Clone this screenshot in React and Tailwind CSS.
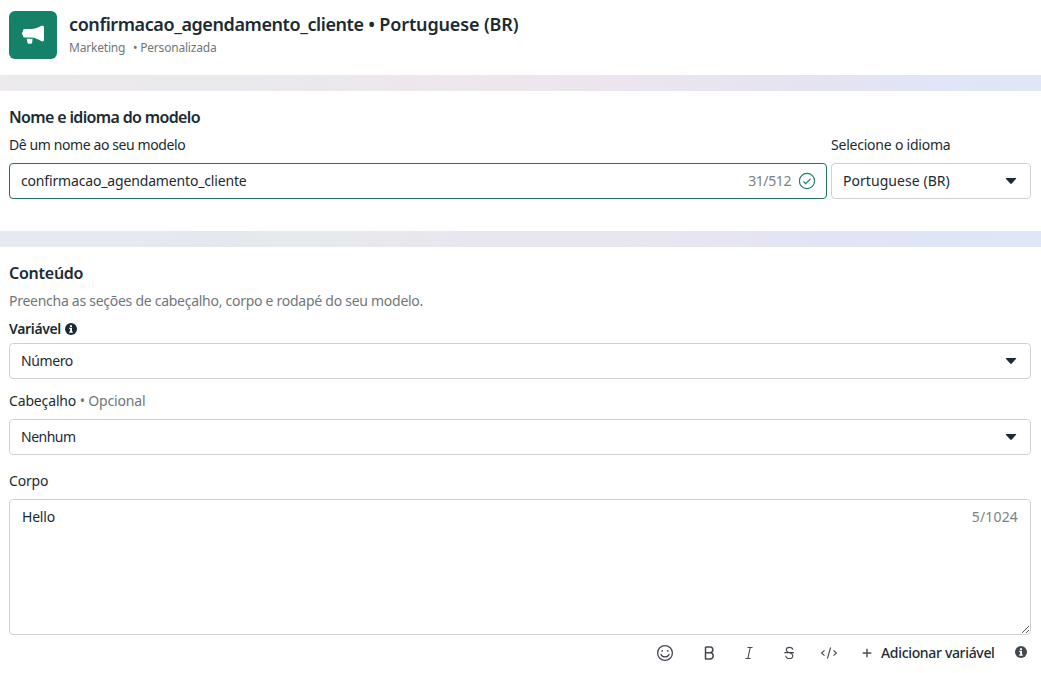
import React from "react";

function InfoIcon({ className }) {
  return (
    <svg className={className} width="12" height="12" viewBox="0 0 12 12">
      <circle cx="6" cy="6" r="6" fill="currentColor" />
      <path d="M5 2.200h2v1.700H5zM4.200 4.800H7v3.600h.8v1.300H4.200V8.400h.9V6.100h-.9z" fill="#fff" />
    </svg>
  );
}

function Caret() {
  return (
    <svg className="shrink-0" width="12" height="8" viewBox="0 0 12 8">
      <path d="M1.3 1h9.4q.9 0 .4.8L6.8 6.6q-.8.7-1.6 0L.9 1.8Q.4 1 1.3 1z" fill="#1c2b33" />
    </svg>
  );
}

function Select({ value, className }) {
  return (
    <div className={`flex h-9 items-center justify-between rounded border border-[#ccd3d7] bg-white pl-[11px] pr-[13px] ${className}`}>
      <span>{value}</span>
      <Caret />
    </div>
  );
}

function Toolbar() {
  return (
    <div className="flex h-9 items-center text-[#444950]">
      <svg className="ml-[647px]" width="18" height="18" viewBox="0 0 18 18" fill="none" stroke="currentColor" strokeWidth="1.3">
        <circle cx="9" cy="9" r="7.400" />
        <circle cx="6.200" cy="6.800" r=".9" fill="currentColor" stroke="none" />
        <circle cx="11.800" cy="6.800" r=".9" fill="currentColor" stroke="none" />
        <path d="M5 10.400q1.100 2.500 4 2.500t4-2.500" strokeLinecap="round" />
      </svg>
      <svg className="ml-[29px]" width="12" height="16" viewBox="0 0 12 16" fill="none" stroke="currentColor" strokeWidth="1.5">
        <path d="M2.500 2h4.700c3.500 0 3.500 5.700 0 5.700H2.500M7.200 7.700c4 0 4 6.300 0 6.300H2.500V2" strokeLinejoin="round" />
      </svg>
      <svg className="ml-7" width="12" height="16" viewBox="0 0 12 16" fill="none" stroke="currentColor" strokeWidth="1.1">
        <path d="M4.500 2.500h5M2.500 13.500h5M7.200 2.500L4.900 13.500" />
      </svg>
      <svg className="ml-7" width="12" height="16" viewBox="0 0 12 16" fill="none" stroke="currentColor" strokeWidth="1.1">
        <path d="M9.800 4.800C9.500 1.500 3.300 1.500 3.300 4.800c0 1.600 1.200 2.400 3.200 2.900 2.100.6 3.300 1.200 3.300 3 0 3.800-6.800 3.800-7 0M1.300 7.600h9.700" />
      </svg>
      <svg className="ml-[25px]" width="18" height="14" viewBox="0 0 18 14" fill="none" stroke="currentColor" strokeWidth="1.1">
        <path d="M4.500 4.300L1.600 7l2.900 2.700M13.500 4.300L16.400 7l-2.900 2.700M10.600 1.500l-3.200 11" />
      </svg>
      <svg className="ml-[23px]" width="12" height="12" viewBox="0 0 12 12" fill="none" stroke="#444f56" strokeWidth="1.4">
        <path d="M6 1.700v8.600M1.700 6h8.600" />
      </svg>
      <span className="ml-2 w-[114px] whitespace-nowrap font-medium tracking-[-0.33px] text-[#1c2b33]">Adicionar variável</span>
      <InfoIcon className="-mt-0.5 ml-5" />
    </div>
  );
}

export default function App() {
  return (
    <main className="h-[673px] w-[1041px] overflow-hidden bg-white font-['Noto_Sans',sans-serif] text-[14px] leading-5 text-[#1c2b33]">
      <header className="flex h-[75px] px-[9px] pt-[11px]">
        <div className="flex size-12 items-center justify-center rounded-md bg-[#158168] pb-0.5">
          <svg width="24" height="24" viewBox="0 0 24 24" fill="#fff">
            <path d="M3.500 7H10c4 0 7.500-1.500 10-3 1.400-.6 3-.2 3 .9v13.300c0 1.100-1.600 1.500-3 .9C17.500 17.500 14 15.500 10 15.500H3.500A1.500 1.500 0 0 1 2 14v-.7c-1.300-.8-1.300-3 0-3.700v-1.100A1.500 1.500 0 0 1 3.500 7zM5.700 16.700h5.900l-.5 4q-.2 1-1.200 1H7.700q-1 0-1.200-1z" />
          </svg>
        </div>
        <div className="ml-3">
          <h1 className="mt-px flex whitespace-pre text-[18px] font-semibold leading-6">
            <span className="tracking-[-0.41px]">confirmacao_agendamento_cliente</span>
            <span className="tracking-[-0.14px]"> • Portuguese (BR)</span>
          </h1>
          <p className="mt-1 flex text-[12px] leading-4 tracking-[-0.2px] text-[#70777c]">
            <span className="w-16">Marketing</span>
            <span>• Personalizada</span>
          </p>
        </div>
      </header>
      <div className="h-4 bg-[linear-gradient(to_right,#eceaec,#eae9ed_25%,#eee7ed_42%,#ece5ee_58%,#e4e3f3_80%,#e0e5f7_92%,#e0e6f5)]" />
      <section className="h-[140px] px-[9px] pt-4">
        <h2 className="text-[16px] font-semibold leading-5 tracking-[-0.65px]">Nome e idioma do modelo</h2>
        <div className="mt-2 flex gap-1">
          <div className="w-[818px]">
            <label className="tracking-[-0.4px]">Dê um nome ao seu modelo</label>
            <div className="mt-2 flex h-9 items-center rounded border border-[#23745f] pl-[11px] pr-[9px]">
              <span className="flex-1 tracking-[-0.16px]">confirmacao_agendamento_cliente</span>
              <span className="tracking-[-0.4px] text-[#7b8388]">31/512</span>
              <svg className="ml-2" width="18" height="18" viewBox="0 0 18 18" fill="none" stroke="#23806a" strokeWidth="1.2">
                <circle cx="8" cy="9" r="7.600" />
                <path d="M4.500 9.500l2.200 2.200L11.500 6.800" />
              </svg>
            </div>
          </div>
          <div className="w-[200px]">
            <label className="tracking-[-0.22px]">Selecione o idioma</label>
            <Select value="Portuguese (BR)" className="mt-2 tracking-[0.05px]" />
          </div>
        </div>
      </section>
      <div className="h-4 bg-[linear-gradient(to_right,#e5e9f1,#e5e9ef_22%,#e7e9ec_34%,#eae6f0_45%,#eae6f1_60%,#e1e4f5_80%,#dee6f7)]" />
      <section className="px-[9px] pt-4">
        <div className="w-[1022px]">
          <h2 className="text-[16px] font-semibold leading-5 tracking-[-0.25px]">Conteúdo</h2>
          <p className="mt-2 tracking-[-0.27px] text-[#70777c]">Preencha as seções de cabeçalho, corpo e rodapé do seu modelo.</p>
          <div className="mt-2 flex items-center gap-1 font-semibold">
            <span className="w-[52px] tracking-[-0.35px]">Variável</span>
            <InfoIcon />
          </div>
          <Select value="Número" className="mt-1 tracking-[-0.4px]" />
          <div className="mt-3 tracking-[-0.15px]">Cabeçalho <span className="text-[#70777c]">• Opcional</span></div>
          <Select value="Nenhum" className="mt-2 tracking-[-0.5px]" />
          <div className="mt-4 tracking-[-0.2px]">Corpo</div>
          <div className="mt-2 flex h-34 justify-between rounded border border-[#ccd3d7] pl-3">
            <span className="mt-[7px] tracking-[-0.2px]">Hello</span>
            <div className="flex flex-col items-end justify-between">
              <span className="mr-3 mt-[7px] tracking-[0.15px] text-[#7b8388]">5/1024</span>
              <svg width="9" height="9" viewBox="0 0 9 9" stroke="#555" strokeWidth="1">
                <path d="M1 8l7-7M5 8l3-3" />
              </svg>
            </div>
          </div>
          <Toolbar />
        </div>
      </section>
    </main>
  );
}
